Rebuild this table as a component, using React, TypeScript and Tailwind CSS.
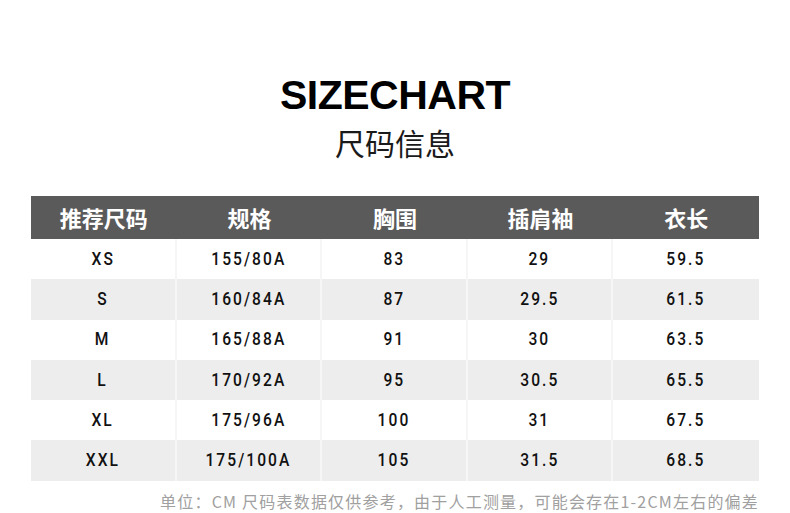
import React from "react";

const headers = ["推荐尺码", "规格", "胸围", "插肩袖", "衣长"];
const rows = [
  ["XS", "155/80A", "83", "29", "59.5"],
  ["S", "160/84A", "87", "29.5", "61.5"],
  ["M", "165/88A", "91", "30", "63.5"],
  ["L", "170/92A", "95", "30.5", "65.5"],
  ["XL", "175/96A", "100", "31", "67.5"],
  ["XXL", "175/100A", "105", "31.5", "68.5"],
];

export default function App() {
  return (
    <div className="w-[790px] h-[513px] bg-white flex flex-col items-center">
      <div
        className="mt-[72px] text-[41px] leading-[46px] font-bold tracking-[-0.5px] text-black"
        style={{ fontFamily: '"Liberation Sans", Arial, sans-serif' }}
      >
        SIZECHART
      </div>
      <div
        className="mt-[4px] text-[30px] leading-[40px] text-[#1a1a1a]"
        style={{ fontFamily: '"Noto Sans CJK SC", sans-serif' }}
      >
        尺码信息
      </div>
      <div className="mt-[34px] w-[728px] flex flex-col">
        <div
          className="grid grid-cols-5 h-[43px] bg-[#5a5a5a] items-center text-white text-[22px] font-bold"
          style={{ fontFamily: '"Noto Sans CJK SC", sans-serif' }}
        >
          {headers.map((h) => (
            <div key={h} className="text-center">
              {h}
            </div>
          ))}
        </div>
        {rows.map((r, i) => (
          <div
            key={i}
            className={`grid grid-cols-5 h-[40.3px] ${i % 2 === 1 ? "bg-[#ededed]" : "bg-white"}`}
          >
            {r.map((c, j) => (
              <div
                key={j}
                className={`flex items-center justify-center ${
                  j < 4 ? "border-r-2 border-[#f6f6f6]" : ""
                }`}
              >
                <span
                  className="inline-block scale-x-[0.82] text-[19px] font-medium tracking-[2.5px] text-[#111]"
                  style={{ fontFamily: 'Roboto, "Liberation Sans", sans-serif' }}
                >
                  {c}
                </span>
              </div>
            ))}
          </div>
        ))}
      </div>
      <div className="w-[728px] flex justify-end mt-[11px]">
        <div
          className="text-[16px] leading-[18px] tracking-[1.2px] text-[#a0a0a0]"
          style={{ fontFamily: '"Noto Sans CJK SC", sans-serif' }}
        >
          单位：CM 尺码表数据仅供参考，由于人工测量，可能会存在1-2CM左右的偏差
        </div>
      </div>
    </div>
  );
}
